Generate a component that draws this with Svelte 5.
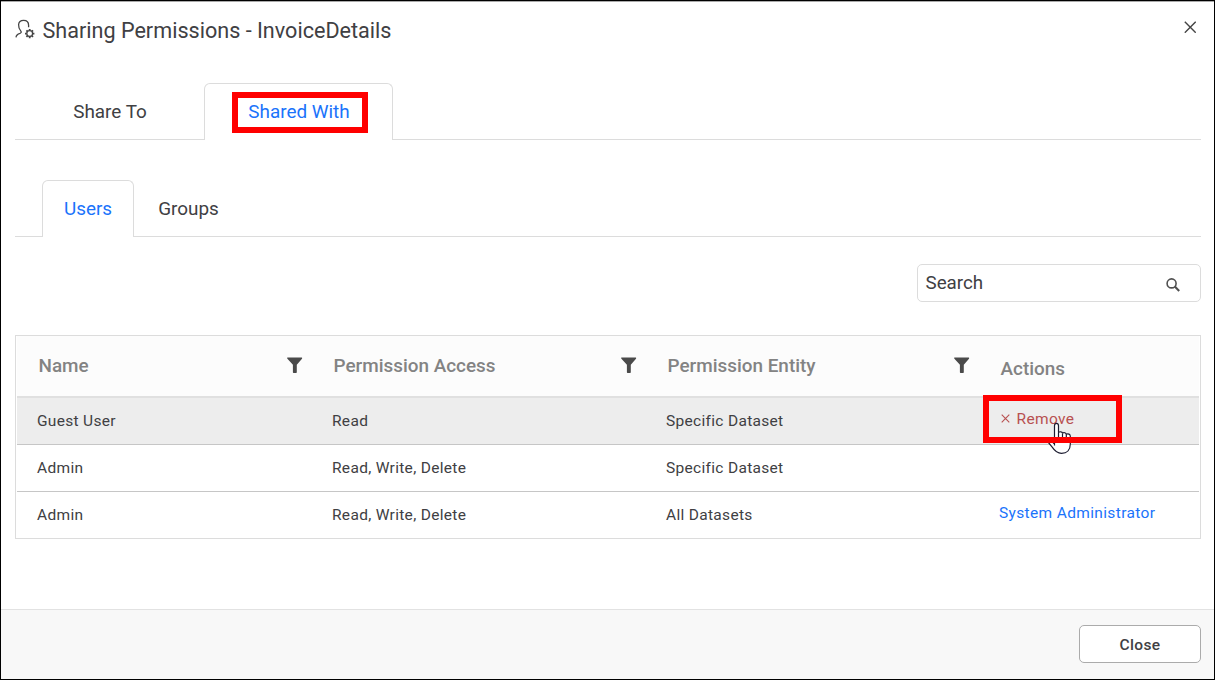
<script>
  const columns = [
    { label: 'Name', filter: true },
    { label: 'Permission Access', filter: true },
    { label: 'Permission Entity', filter: true },
    { label: 'Actions', filter: false }
  ];
  const rows = [
    { name: 'Guest User', access: 'Read', entity: 'Specific Dataset', action: 'remove' },
    { name: 'Admin', access: 'Read, Write, Delete', entity: 'Specific Dataset', action: '' },
    { name: 'Admin', access: 'Read, Write, Delete', entity: 'All Datasets', action: 'system' }
  ];
</script>

<div class="dialog">
  <header>
    <svg class="user-icon" width="21" height="22" viewBox="0 0 21 22" fill="none" stroke="#444" stroke-width="1.3">
      <path d="M1 19.4C1.2 17 2.7 16 5 15.3C6.2 14.9 6.5 14.3 6 13.4C4.4 11.6 3.4 9.6 3.6 6.6C3.8 3.8 5.8 2.4 8.6 2.4C11.7 2.4 13.6 4.4 13.6 7.3V9.2" />
      <circle cx="14.7" cy="15.6" r="2.9" stroke-width="1.3" />
      <path stroke-width="1.8" d="M14.7 10.9V12.5M14.7 18.7V20.3M10 15.6H11.6M17.8 15.6H19.4M11.4 12.3L12.5 13.4M16.9 17.8L18 18.9M11.4 18.9L12.5 17.8M16.9 13.4L18 12.3" />
    </svg>
    <h1>Sharing Permissions - InvoiceDetails</h1>
    <button class="dismiss" aria-label="Dismiss">
      <svg width="12" height="12" viewBox="0 0 12 12" stroke="#444" stroke-width="1.4"><path d="M.8 .8L11.7 11.7M11.7 .8L.8 11.7" /></svg>
    </button>
  </header>

  <main>
    <nav class="tabs primary">
      <a class="tab" href="#to"><span>Share To</span></a>
      <a class="tab active" href="#with"><span>Shared With</span><i class="mark tab-mark"></i></a>
    </nav>
    <nav class="tabs secondary">
      <a class="tab active" href="#users"><span>Users</span></a>
      <a class="tab" href="#groups"><span>Groups</span></a>
    </nav>

    <div class="search">
      <span>Search</span>
      <svg width="14" height="14" viewBox="0 0 14 14" fill="none" stroke="#505050"><circle cx="5.6" cy="5.4" r="4.5" stroke-width="1.6" /><path stroke-width="2.1" d="M8.8 8.6L13.2 13" /></svg>
    </div>

    <section class="grid">
      <div class="row head">
        {#each columns as column}
          <div class="cell" class:last={!column.filter}>
            <span>{column.label}</span>
            {#if column.filter}
              <svg width="16" height="16" viewBox="0 0 16 16" fill="#4a4a4a"><path d="M.5 .5H14.7Q15.5 .8 15 1.7L9.8 7.8V15.2Q9.8 15.9 9.1 15.9H6.6Q5.9 15.9 5.9 15.2V7.8L.4 1.7Q-.2 .9 .5 .5Z" /></svg>
            {/if}
          </div>
        {/each}
      </div>
      {#each rows as row}
        <div class="row body" class:hover={row.action === 'remove'}>
          <div class="cell">{row.name}</div>
          <div class="cell">{row.access}</div>
          <div class="cell">{row.entity}</div>
          <div class="cell action">
            {#if row.action === 'remove'}
              <span class="remove">
                <svg width="9" height="9" viewBox="0 0 9 9" stroke="#b85050" stroke-width="1.1"><path d="M.7 .7L8.3 8.3M8.3 .7L.7 8.3" /></svg>
                Remove
              </span>
              <svg class="pointer" width="24" height="34" viewBox="0 0 24 34" fill="#fff" stroke="#1c1c30" stroke-width="1.2" stroke-linejoin="round">
                <path d="M6.5 23.5V3.7C6.5 .5 10.5 .5 10.5 3.7V10.6C11.5 9.3 14.2 9.6 14.5 11.1C16 10 18 10.8 18.3 12.3C20 11.4 22.3 12.2 22.3 14.2V22C22.3 28 19 31.3 13.5 31.3C9 31.3 6.5 28.5 4 24.8L.8 21C.4 19 2.4 18.2 4 19.5L6.5 22" />
                <path fill="none" d="M10.5 11V17M14.5 11.5V17.5M18.3 12.5V18" />
              </svg>
              <i class="mark row-mark"></i>
            {:else if row.action === 'system'}
              <a class="system" href="#system">System Administrator</a>
            {/if}
          </div>
        </div>
      {/each}
    </section>
  </main>

  <footer><button class="close">Close</button></footer>
</div>

<style>
  :global(body) { margin: 0; background: #fff; }
  .dialog, .dialog * { box-sizing: border-box; }
  .dialog {
    width: 1215px; height: 680px; border: 1px solid #000; background: #fff;
    display: flex; flex-direction: column; overflow: hidden;
    font-family: Roboto, "Liberation Sans", sans-serif; color: #404043;
  }
  a { text-decoration: none; color: inherit; }
  button { font-family: inherit; }
  header { height: 82px; flex: none; display: flex; align-items: flex-start; padding: 0 18px 0 14px; box-shadow: inset 0 1px #aaa; }
  .user-icon { margin-top: 17px; flex: none; }
  h1 { margin: 16px 0 0 6.5px; font-size: 21.6px; line-height: 28px; font-weight: 400; white-space: nowrap; }
  .dismiss { margin: 20px 0 0 auto; padding: 0; border: 0; background: none; width: 12px; height: 12px; display: flex; }
  main { padding: 0 13px 0 14px; flex: 1; display: flex; flex-direction: column; }
  .tabs { display: flex; height: 57px; flex: none; border-bottom: 1px solid #dcdcdc; font-size: 18.9px; }
  .tab { position: relative; height: 57px; padding: 0 0 2px 1px; display: flex; align-items: center; justify-content: center; border: 1px solid transparent; border-bottom: 0; white-space: nowrap; }
  .tab.active { color: #1a73fb; border-color: #dcdcdc; border-radius: 6px 6px 0 0; background: #fff; }
  .primary .tab { width: 189px; }
  .secondary { margin-top: 40px; padding-left: 27px; }
  .secondary .tab { padding-left: 0; }
  .secondary .tab.active { width: 92px; }
  .secondary .tab:last-child { width: 109px; }
  .mark { position: absolute; border: 6px solid #f00; }
  .tab-mark { left: 27px; top: 8px; width: 136px; height: 41px; }
  .search { align-self: flex-end; margin-top: 27px; width: 284px; height: 38px; flex: none; border: 1px solid #dcdcdc; border-radius: 5px; display: flex; justify-content: space-between; align-items: flex-start; padding: 7px 20px 0 7.5px; font-size: 18.8px; line-height: 22px; }
  .search svg { margin-top: 6px; }
  .grid { margin-top: 33px; border: 1px solid #dcdcdc; padding: 0 1px; height: 204px; flex: none; }
  .row { display: grid; grid-template-columns: 295px 334px 333px 1fr; }
  .cell { position: relative; padding-left: 20px; display: flex; align-items: center; white-space: nowrap; }
  .head { height: 62px; background: #fcfcfc; border-bottom: 2px solid #e0e0e0; color: #838383; font-size: 18.9px; font-weight: 500; }
  .head .cell { justify-content: space-between; padding: 0 9px 2px 21.5px; }
  .head .last span { position: relative; top: 3px; }
  .body { height: 47px; border-bottom: 1px solid #c6c6c6; font-size: 15.5px; letter-spacing: .31px; }
  .body:last-child { border-bottom: 0; padding-bottom: 2px; }
  .hover { background: #ededed; }
  .action { align-items: flex-start; padding-top: 11px; line-height: 20px; letter-spacing: .35px; }
  .remove { color: #b85050; display: flex; align-items: center; gap: 6.5px; padding-left: 2px; }
  .remove svg { margin-bottom: 2px; }
  .system { color: #1a73fb; }
  .pointer { position: absolute; left: 69px; top: 24px; z-index: 1; }
  .row-mark { left: 4px; top: -3px; width: 139px; height: 48px; z-index: 2; }
  footer { height: 70px; flex: none; border-top: 1px solid #e2e2e2; background: #f8f8f8; display: flex; justify-content: flex-end; padding: 15px 13px 0 0; }
  .close { width: 122px; height: 38px; background: #fff; border: 1px solid #ababab; border-radius: 5px; font-size: 15.5px; letter-spacing: .4px; font-weight: 500; color: #404043; padding: 1px 0 0; }
</style>
